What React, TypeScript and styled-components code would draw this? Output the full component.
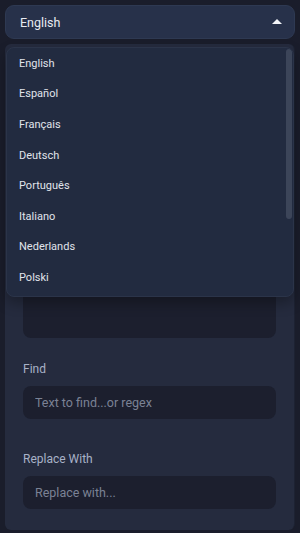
import React, { useState } from "react";
import styled, { createGlobalStyle } from "styled-components";

const GlobalStyle = createGlobalStyle`
  html, body {
    margin: 0;
    padding: 0;
    background: #1a1d2b;
    font-family: Roboto, "Noto Sans", "Noto Sans CJK SC", sans-serif;
  }
  * { box-sizing: border-box; }
`;

const languages = [
  "English",
  "Español",
  "Français",
  "Deutsch",
  "Português",
  "Italiano",
  "Nederlands",
  "Polski",
  "Русский",
  "日本語",
  "中文",
  "한국어",
];

const Page = styled.div`
  position: relative;
  display: flex;
  flex-direction: column;
  gap: 5px;
  padding: 5px;
  height: 533px;
`;

const SelectButton = styled.button`
  display: flex;
  align-items: center;
  justify-content: space-between;
  height: 36px;
  padding: 0 12px 0 14px;
  background: #27314a;
  border: 1px solid #2e3952;
  border-radius: 9px;
  color: #e8ebf2;
  font-family: inherit;
  font-size: 12.5px;
  cursor: pointer;
`;

const Caret = styled.span`
  width: 0;
  height: 0;
  border-left: 5px solid transparent;
  border-right: 5px solid transparent;
  border-bottom: 5px solid #f2f4f8;
  margin-top: -2px;
`;

const Dropdown = styled.div`
  position: absolute;
  top: 47px;
  left: 6px;
  right: 6px;
  height: 250px;
  overflow: hidden;
  background: #222b40;
  border: 1px solid #2b3449;
  border-radius: 8px;
  box-shadow: 0 6px 14px rgba(0, 0, 0, 0.3);
  z-index: 10;
`;

const Menu = styled.ul`
  height: 100%;
  margin: 0;
  padding: 0;
  list-style: none;
  overflow-y: auto;
  scrollbar-width: none;
`;

const ScrollThumb = styled.div`
  position: absolute;
  top: 1px;
  right: 1px;
  width: 6px;
  height: 170px;
  border-radius: 3px;
  background: #3c4559;
`;

const MenuItem = styled.li`
  height: 30.6px;
  display: flex;
  align-items: center;
  padding-left: 12px;
  color: #e0e4eb;
  font-size: 11px;
`;

const Panel = styled.div`
  flex: 1;
  display: flex;
  flex-direction: column;
  padding: 18px 18px 21px;
  margin-bottom: -2px;
  background: #252b3e;
  border-right: 1px solid #1d2232;
  border-radius: 6px;
`;

const Field = styled.div<{ $gap: number }>`
  display: flex;
  flex-direction: column;
  gap: 10px;
  margin-bottom: ${(p) => p.$gap}px;
`;

const Label = styled.label`
  color: #a8b2c7;
  font-size: 12px;
`;

const TextArea = styled.textarea`
  height: 252px;
  resize: none;
  background: #1c1f2e;
  border: none;
  border-radius: 8px;
  padding: 10px 12px;
  color: #e0e4eb;
  font-family: inherit;
  outline: none;
`;

const Input = styled.input`
  height: 33px;
  padding: 0 12px;
  background: #1c1f2e;
  border: none;
  border-radius: 8px;
  color: #e0e4eb;
  font-family: inherit;
  font-size: 12.5px;
  outline: none;

  &::placeholder {
    color: #7b8295;
  }
`;

export default function App() {
  const [lang] = useState("English");
  return (
    <>
      <GlobalStyle />
      <Page>
        <SelectButton>
          {lang}
          <Caret />
        </SelectButton>
        <Dropdown>
          <Menu>
            {languages.map((l) => (
              <MenuItem key={l}>{l}</MenuItem>
            ))}
          </Menu>
          <ScrollThumb />
        </Dropdown>
        <Panel>
          <Field $gap={24}>
            <Label>Text</Label>
            <TextArea />
          </Field>
          <Field $gap={33}>
            <Label>Find</Label>
            <Input placeholder="Text to find...or regex" />
          </Field>
          <Field $gap={0}>
            <Label>Replace With</Label>
            <Input placeholder="Replace with..." />
          </Field>
        </Panel>
      </Page>
    </>
  );
}
